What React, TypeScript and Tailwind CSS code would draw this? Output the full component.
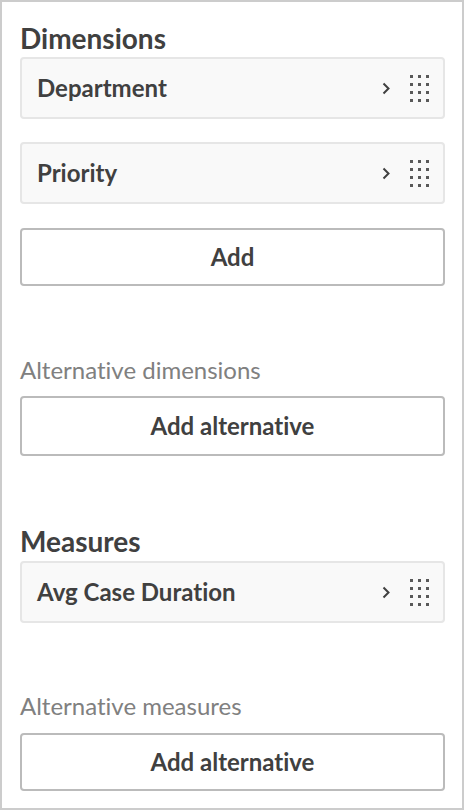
import type { ReactNode } from "react";

const font = { fontFamily: "Lato, 'Open Sans', sans-serif" };

function Chevron() {
  return (
    <svg width="10" height="13" viewBox="0 0 10 13" className="text-[#404040]">
      <path d="M2.5 1.5 L7.5 6.5 L2.5 11.5" fill="none" stroke="currentColor" strokeWidth="2" />
    </svg>
  );
}

function Grip() {
  const dots = [];
  for (let r = 0; r < 4; r++) {
    for (let c = 0; c < 3; c++) {
      dots.push(<rect key={`${r}-${c}`} x={c * 8} y={r * 8} width="3" height="3" fill="#595959" />);
    }
  }
  return (
    <svg width="19" height="27" viewBox="0 0 19 27">
      {dots}
    </svg>
  );
}

function ItemCard({ label, className = "" }: { label: string; className?: string }) {
  return (
    <div
      className={`flex h-[62px] items-center rounded-[4px] border-2 border-[#e6e6e6] bg-[#f9f9f9] pl-[15px] pr-[14px] ${className}`}
    >
      <span className="flex-1 text-[24px] leading-[28px] font-bold text-[#404040]">{label}</span>
      <span className="-ml-[4px] flex">
        <Chevron />
      </span>
      <span className="ml-[19px] flex">
        <Grip />
      </span>
    </div>
  );
}

function OutlineButton({ children, className = "" }: { children: ReactNode; className?: string }) {
  return (
    <button
      type="button"
      className={`flex w-full items-center justify-center rounded-[4px] border-2 border-[#bbbbbb] bg-white text-[24px] leading-[28px] font-bold text-[#404040] ${className}`}
    >
      {children}
    </button>
  );
}

export default function App() {
  return (
    <div
      className="h-[810px] w-[464px] border-2 border-[#cccccc] bg-white pl-[18px] pr-[17px] pt-[22px] [font-variant-ligatures:none]"
      style={font}
    >
      <h2 className="text-[28px] leading-[28px] font-bold text-[#404040]">Dimensions</h2>
      <ItemCard label="Department" className="mt-[5px]" />
      <ItemCard label="Priority" className="mt-[23px]" />
      <OutlineButton className="mt-[24px] h-[58px]">Add</OutlineButton>

      <p className="mt-[72px] text-[24px] leading-[24px] text-[#808080]">Alternative dimensions</p>
      <OutlineButton className="mt-[14px] h-[60px]">Add alternative</OutlineButton>

      <h2 className="mt-[71px] text-[28px] leading-[28px] font-bold text-[#404040]">Measures</h2>
      <ItemCard label="Avg Case Duration" className="mt-[6px]" />

      <p className="mt-[71px] text-[24px] leading-[24px] text-[#808080]">Alternative measures</p>
      <OutlineButton className="mt-[15px] h-[58px]">Add alternative</OutlineButton>
    </div>
  );
}
